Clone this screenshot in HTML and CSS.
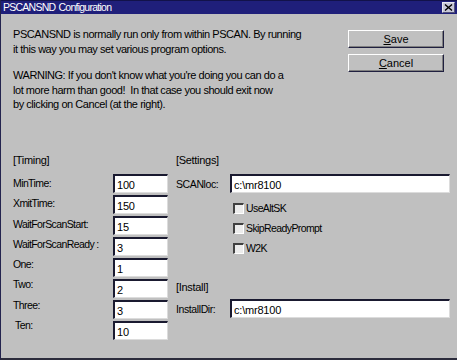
FILE: index.html
```html
<!DOCTYPE html>
<html lang="en">
<head>
    <meta charset="UTF-8">
    <title>PSCANSND Configuration</title>
    <link rel="stylesheet" href="styles.css">
</head>
<body>
    <div class="window">
        <div class="titlebar">
            <span class="title">PSCANSND Configuration</span>
            <span class="close">
                <svg width="9" height="7" viewBox="0 0 9 7"><path d="M1 0.5 L8 6.5 M8 0.5 L1 6.5" stroke="#000" stroke-width="1.4" fill="none"/></svg>
            </span>
        </div>

        <div class="content">
            <div class="top">
                <div class="intro">
                    <p>PSCANSND is normally run only from within PSCAN. By running<br>it this way you may set various program options.</p>
                    <p class="warning">WARNING: If you don't know what you're doing you can do a<br>lot more harm than good!&nbsp; In that case you should exit now<br>by clicking on Cancel (at the right).</p>
                </div>
                <div class="buttons">
                    <button class="btn"><u>S</u>ave</button>
                    <button class="btn"><u>C</u>ancel</button>
                </div>
            </div>

            <div class="sections">
                <div class="timing">
                    <div class="heading">[Timing]</div>
                    <div class="timing-grid">
                        <div class="labels">
                            <span>MinTime:</span>
                            <span>XmitTime:</span>
                            <span>WaitForScanStart:</span>
                            <span>WaitForScanReady :</span>
                            <span>One:</span>
                            <span>Two:</span>
                            <span>Three:</span>
                            <span class="indent">Ten:</span>
                        </div>
                        <div class="fields">
                            <input type="text" class="field" value="100">
                            <input type="text" class="field" value="150">
                            <input type="text" class="field" value="15">
                            <input type="text" class="field" value="3">
                            <input type="text" class="field" value="1">
                            <input type="text" class="field" value="2">
                            <input type="text" class="field" value="3">
                            <input type="text" class="field" value="10">
                        </div>
                    </div>
                </div>

                <div class="settings">
                    <div class="heading">[Settings]</div>
                    <div class="row">
                        <label for="scanloc">SCANloc:</label>
                        <input type="text" id="scanloc" class="field wide" value="c:\mr8100">
                    </div>
                    <div class="checks">
                        <div class="check"><span class="box"></span>UseAltSK</div>
                        <div class="check"><span class="box"></span>SkipReadyPrompt</div>
                        <div class="check"><span class="box"></span>W2K</div>
                    </div>
                    <div class="heading install">[Install]</div>
                    <div class="row install-row">
                        <label for="installdir">InstallDir:</label>
                        <input type="text" id="installdir" class="field wide" value="c:\mr8100">
                    </div>
                </div>
            </div>
        </div>
    </div>
</body>
</html>
```

FILE: styles.css
```css
body {
    margin: 0;
    padding: 0;
    background: #c0c0c0;
    font-family: "Liberation Sans", Arial, sans-serif;
    font-size: 11px;
    color: #000;
}
.window {
    width: 457px;
    height: 360px;
    box-sizing: border-box;
    background: #c0c0c0;
    border-left: 1px solid #23234e;
    border-bottom: 2px solid #2c2c3c;
    overflow: hidden;
}
.titlebar {
    height: 14px;
    background: #1f1f7a;
    border-top: 1px solid #12124a;
    box-sizing: border-box;
    display: flex;
    align-items: center;
    justify-content: space-between;
    padding: 0 2px 0 2px;
}
.title {
    color: #fff;
    font-size: 10.5px;
    letter-spacing: -0.75px;
    word-spacing: 1px;
    line-height: 13px;
}
.close {
    width: 11px;
    height: 9px;
    background: #c8c8d8;
    border: 1px solid #e8e8f0;
    border-right-color: #50507a;
    border-bottom-color: #50507a;
    display: flex;
    align-items: center;
    justify-content: center;
}
.content {
    padding: 13px 0 0 12px;
}
.top {
    display: flex;
    height: 126px;
}
.intro p {
    margin: 0;
    line-height: 14.5px;
    letter-spacing: -0.45px;
}
.intro .warning {
    margin-top: 12px;
}
.buttons {
    margin-left: auto;
    margin-right: 13px;
    margin-top: 3px;
    display: flex;
    flex-direction: column;
    gap: 6px;
}
.btn {
    width: 96px;
    height: 18px;
    padding: 0;
    font-family: inherit;
    font-size: 11px;
    color: #000;
    background: #c0c0c0;
    border: 1px solid #fff;
    border-right-color: #202040;
    border-bottom-color: #202040;
    box-shadow: inset -1px -1px 0 #808080;
}
.sections {
    display: flex;
    gap: 8px;
}
.heading {
    line-height: 14px;
    letter-spacing: -0.3px;
}
.timing {
    width: 155px;
}
.timing-grid {
    display: flex;
}
.labels {
    width: 100px;
    margin-top: 6px;
    display: flex;
    flex-direction: column;
    font-size: 10.5px;
    letter-spacing: -0.6px;
}
.labels span {
    line-height: 20.3px;
}
.labels .indent {
    padding-left: 2px;
}
.fields {
    margin-top: 7px;
    display: flex;
    flex-direction: column;
    gap: 2px;
}
.field {
    width: 55px;
    height: 19px;
    box-sizing: border-box;
    margin: 0;
    padding: 1px 0 0 2px;
    font-family: inherit;
    font-size: 11px;
    letter-spacing: -0.2px;
    color: #000;
    background: #fff;
    border: 1px solid #dcdcdc;
    border-top: 2px solid #1a1a30;
    border-left: 2px solid #1a1a30;
    outline: none;
}
.field.wide {
    width: 220px;
}
.settings {
    flex: 1;
}
.row {
    display: flex;
    align-items: center;
    margin-top: 7px;
}
.row label {
    width: 54px;
    font-size: 10.5px;
    letter-spacing: -0.4px;
}
.checks {
    margin-top: 5px;
    padding-left: 57px;
}
.check {
    height: 20px;
    display: flex;
    align-items: center;
    gap: 2px;
    font-size: 10.5px;
    letter-spacing: -0.6px;
}
.box {
    width: 11px;
    height: 11px;
    box-sizing: border-box;
    background: #ececec;
    border: 1px solid #fff;
    border-top: 2px solid #404040;
    border-left: 2px solid #404040;
}
.heading.install {
    margin-top: 22px;
}
.install-row {
    margin-top: 5px;
}
```
